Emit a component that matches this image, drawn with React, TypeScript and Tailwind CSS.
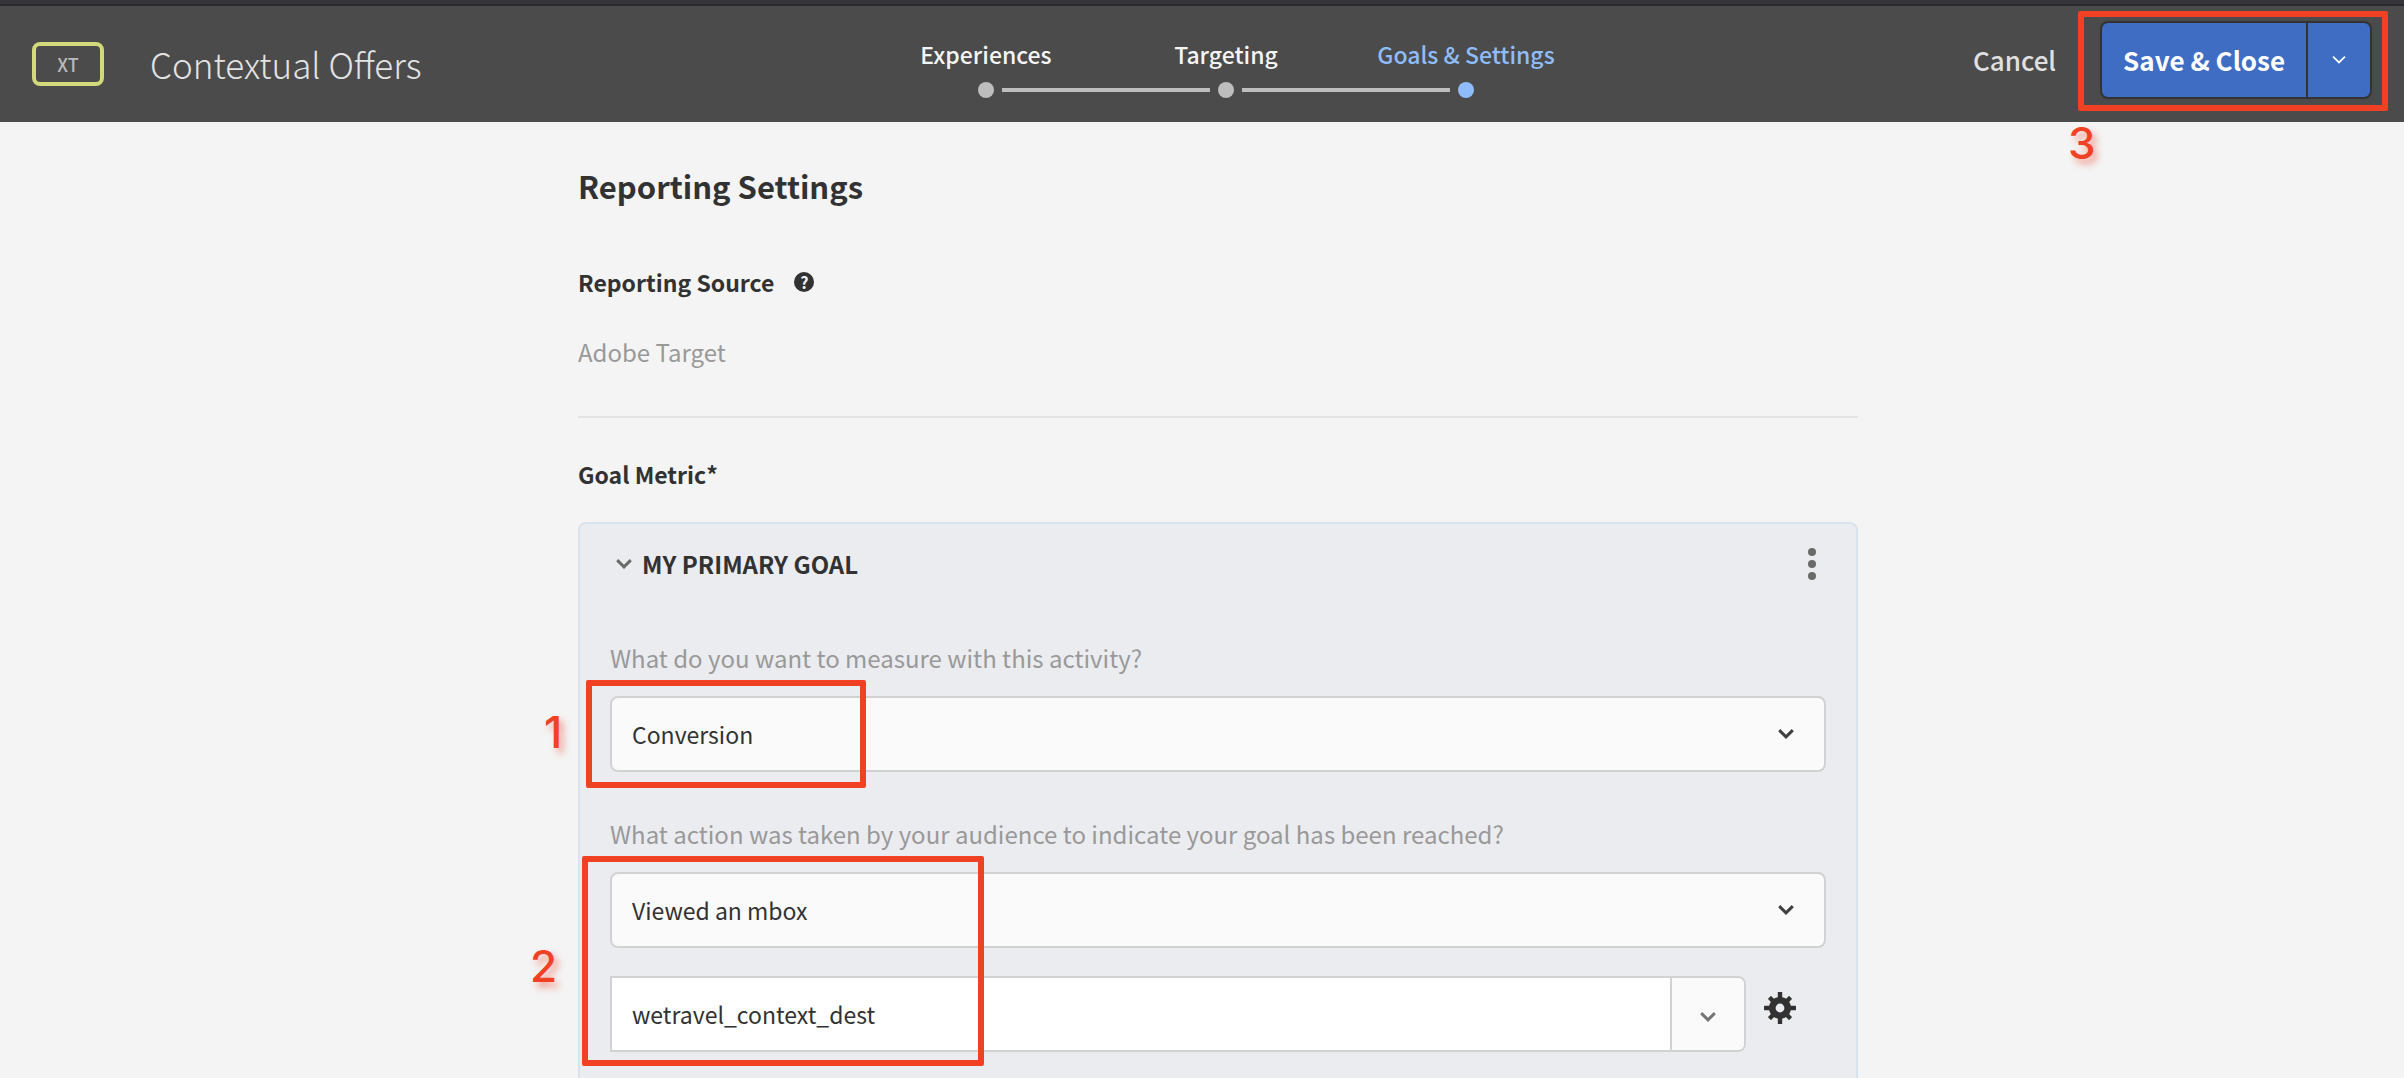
import React from "react";

function Chevron({ className, strokeWidth = 3 }: { className?: string; strokeWidth?: number }) {
  return (
    <svg viewBox="0 0 16 12" fill="none" stroke="currentColor" strokeWidth={strokeWidth} className={className} aria-hidden="true">
      <path d="M1.2 2.2 8 8.8l6.8-6.6" />
    </svg>
  );
}

function Gear() {
  const teeth = [0, 45, 90, 135, 180, 225, 270, 315];
  return (
    <svg viewBox="0 0 32 32" className="size-8" fill="#323232" aria-hidden="true">
      {teeth.map((a) => (
        <rect key={a} x="13.8" y={a % 90 === 0 ? 0 : 1} width="4.4" height="7" rx="0.6" transform={`rotate(${a} 16 16)`} />
      ))}
      <path fillRule="evenodd" d="M16 5a11 11 0 1 0 0 22a11 11 0 1 0 0-22zm0 6.6a4.4 4.4 0 1 1 0 8.8a4.4 4.4 0 1 1 0-8.8z" />
    </svg>
  );
}

function Callout({ n, className }: { n: number; className: string }) {
  return (
    <span
      className={`pointer-events-none absolute font-['Inter','Liberation_Sans',sans-serif] text-[44px] leading-[44px] font-medium text-[#f04124] [text-shadow:4px_5px_7px_rgba(240,65,36,0.5)] ${className}`}
    >
      {n}
    </span>
  );
}

const steps = [
  { label: "Experiences", current: false },
  { label: "Targeting", current: false },
  { label: "Goals & Settings", current: true },
];

function Steps() {
  return (
    <ol className="grid grid-cols-3">
      {steps.map((s, i) => (
        <li key={s.label} className="relative flex w-60 flex-col items-center">
          <a
            href="#"
            aria-current={s.current ? "step" : undefined}
            className={s.current ? "text-[23px] leading-8 font-medium text-[#8fbcfa]" : "text-[23px] leading-8 font-medium text-[#f5f5f5]"}
          >
            {s.label}
          </a>
          <span className={s.current ? "mt-3 size-4 rounded-full bg-[#8fbcfa]" : "mt-3 size-4 rounded-full bg-[#bebebe]"} />
          {i < 2 && <span className="absolute bottom-1.5 left-34 h-1 w-52 bg-[#bebebe]" />}
        </li>
      ))}
    </ol>
  );
}

function SelectField({ id, label, value, options }: { id: string; label: string; value: string; options: string[] }) {
  return (
    <>
      <label htmlFor={id} className="block leading-8 text-[#999999]">
        {label}
      </label>
      <div className="relative mt-5.5 flex items-center">
        <select
          id={id}
          defaultValue={value}
          className="h-19 w-full appearance-none rounded-lg border-2 border-[#d2d2d2] bg-[#fafafa] pr-16 pl-5 text-[23px] text-[#323232]"
        >
          {options.map((o) => (
            <option key={o}>{o}</option>
          ))}
        </select>
        <Chevron className="pointer-events-none absolute right-8 h-3 w-4 text-[#3f3f3f]" />
      </div>
    </>
  );
}

export default function App() {
  return (
    <div className="flex min-h-screen flex-col bg-[#f4f4f4] font-['Noto_Sans_CJK_SC','Open_Sans',sans-serif] text-2xl text-[#323232]">
      <header className="relative z-10 border-t-4 border-[#35353b] bg-[#4b4b4b]">
        <div className="grid h-[118px] grid-cols-[1fr_auto_1fr] items-center border-t-2 border-[#2b2b2b] px-8">
          <div className="flex items-center gap-11.5">
            <span className="flex h-11 w-18 items-center justify-center rounded-lg border-4 border-[#d3da7b] text-lg font-medium text-[#b9b9b9]">XT</span>
            <h1 className="text-[35px] leading-12 font-light text-[#e3e3e3]">Contextual Offers</h1>
          </div>
          <div className="pt-2 pl-12">
            <Steps />
          </div>
          <div className="flex items-center justify-end gap-11 pb-2">
            <button type="button" className="text-[26px] leading-10 font-medium text-[#e0e0e0]">Cancel</button>
            <div className="relative flex h-[78px] rounded-lg border-2 border-[#333333] bg-[#3f6dc3] text-white">
              <button type="button" className="px-[21px] text-[26px] leading-10 font-bold">Save &amp; Close</button>
              <button type="button" aria-label="More save options" className="flex w-16 items-center justify-center border-l-2 border-[#333333]">
                <Chevron className="h-3 w-3.5" strokeWidth={2} />
              </button>
              <div className="pointer-events-none absolute -top-3 -right-4.5 -bottom-3.5 -left-6 rounded-xs border-6 border-[#f04124]" />
              <Callout n={3} className="top-[98px] -left-8.5" />
            </div>
          </div>
        </div>
      </header>

      <main className="mx-auto flex w-full max-w-[1312px] flex-1 flex-col pt-11 pl-8">
        <h2 className="text-[31px] leading-10 font-bold">Reporting Settings</h2>
        <div className="mt-15 flex items-center gap-5">
          <h3 className="text-[23px] leading-8 font-bold">Reporting Source</h3>
          <button type="button" aria-label="About the reporting source" className="flex size-5 items-center justify-center rounded-full bg-[#323232] text-base leading-4 font-bold text-[#f4f4f4]">
            ?
          </button>
        </div>
        <p className="mt-9.5 leading-8 text-[#999999]">Adobe Target</p>
        <hr className="mt-12 border-t-2 border-[#e4e4e4]" />
        <h3 className="mt-10 text-[23px] leading-8 font-bold">Goal Metric*</h3>

        <section className="mt-8 flex-1 rounded-t-lg border-2 border-b-0 border-[#d9e3ee] bg-[#ebecf0] px-7.5 pt-6 pb-6">
          <div className="flex items-center justify-between">
            <button type="button" aria-expanded="true" className="flex items-center gap-2.5 pl-1.5 leading-8 font-bold">
              <Chevron className="h-3 w-4 text-[#6a6a6a]" />
              MY PRIMARY GOAL
            </button>
            <button type="button" aria-label="Goal options" className="mr-2.5 flex flex-col items-center gap-1">
              <span className="size-2 rounded-full bg-[#6a6a6a]" />
              <span className="size-2 rounded-full bg-[#6a6a6a]" />
              <span className="size-2 rounded-full bg-[#6a6a6a]" />
            </button>
          </div>

          <div className="relative mt-15.5">
            <SelectField
              id="measure"
              label="What do you want to measure with this activity?"
              value="Conversion"
              options={["Conversion", "Revenue", "Engagement"]}
            />
            <div className="pointer-events-none absolute -bottom-4 -left-6 h-27 w-70 rounded-xs border-6 border-[#f04124]" />
            <Callout n={1} className="bottom-4.5 -left-16.5" />
          </div>

          <div className="relative mt-11.5">
            <SelectField
              id="action"
              label="What action was taken by your audience to indicate your goal has been reached?"
              value="Viewed an mbox"
              options={["Viewed an mbox", "Viewed a page", "Clicked an mbox"]}
            />
            <div className="mt-7 flex items-center">
              <div className="flex h-19 w-full max-w-[1136px] overflow-hidden rounded-r-lg border-2 border-[#d2d2d2]">
                <input aria-label="Mbox name" defaultValue="wetravel_context_dest" className="min-w-0 flex-1 bg-white pl-5 text-[23px] text-[#323232] outline-none" />
                <button type="button" aria-label="Choose an mbox" className="flex w-[74px] items-center justify-center border-l-2 border-[#d2d2d2] bg-[#fafafa] pt-1.5">
                  <Chevron className="h-3 w-4 text-[#757575]" />
                </button>
              </div>
              <button type="button" aria-label="Mbox settings" className="mb-3 ml-4.5">
                <Gear />
              </button>
            </div>
            <div className="pointer-events-none absolute -bottom-3.5 -left-7 h-[210px] w-[402px] rounded-xs border-6 border-[#f04124]" />
            <Callout n={2} className="bottom-16 -left-20" />
          </div>
        </section>
      </main>
    </div>
  );
}
